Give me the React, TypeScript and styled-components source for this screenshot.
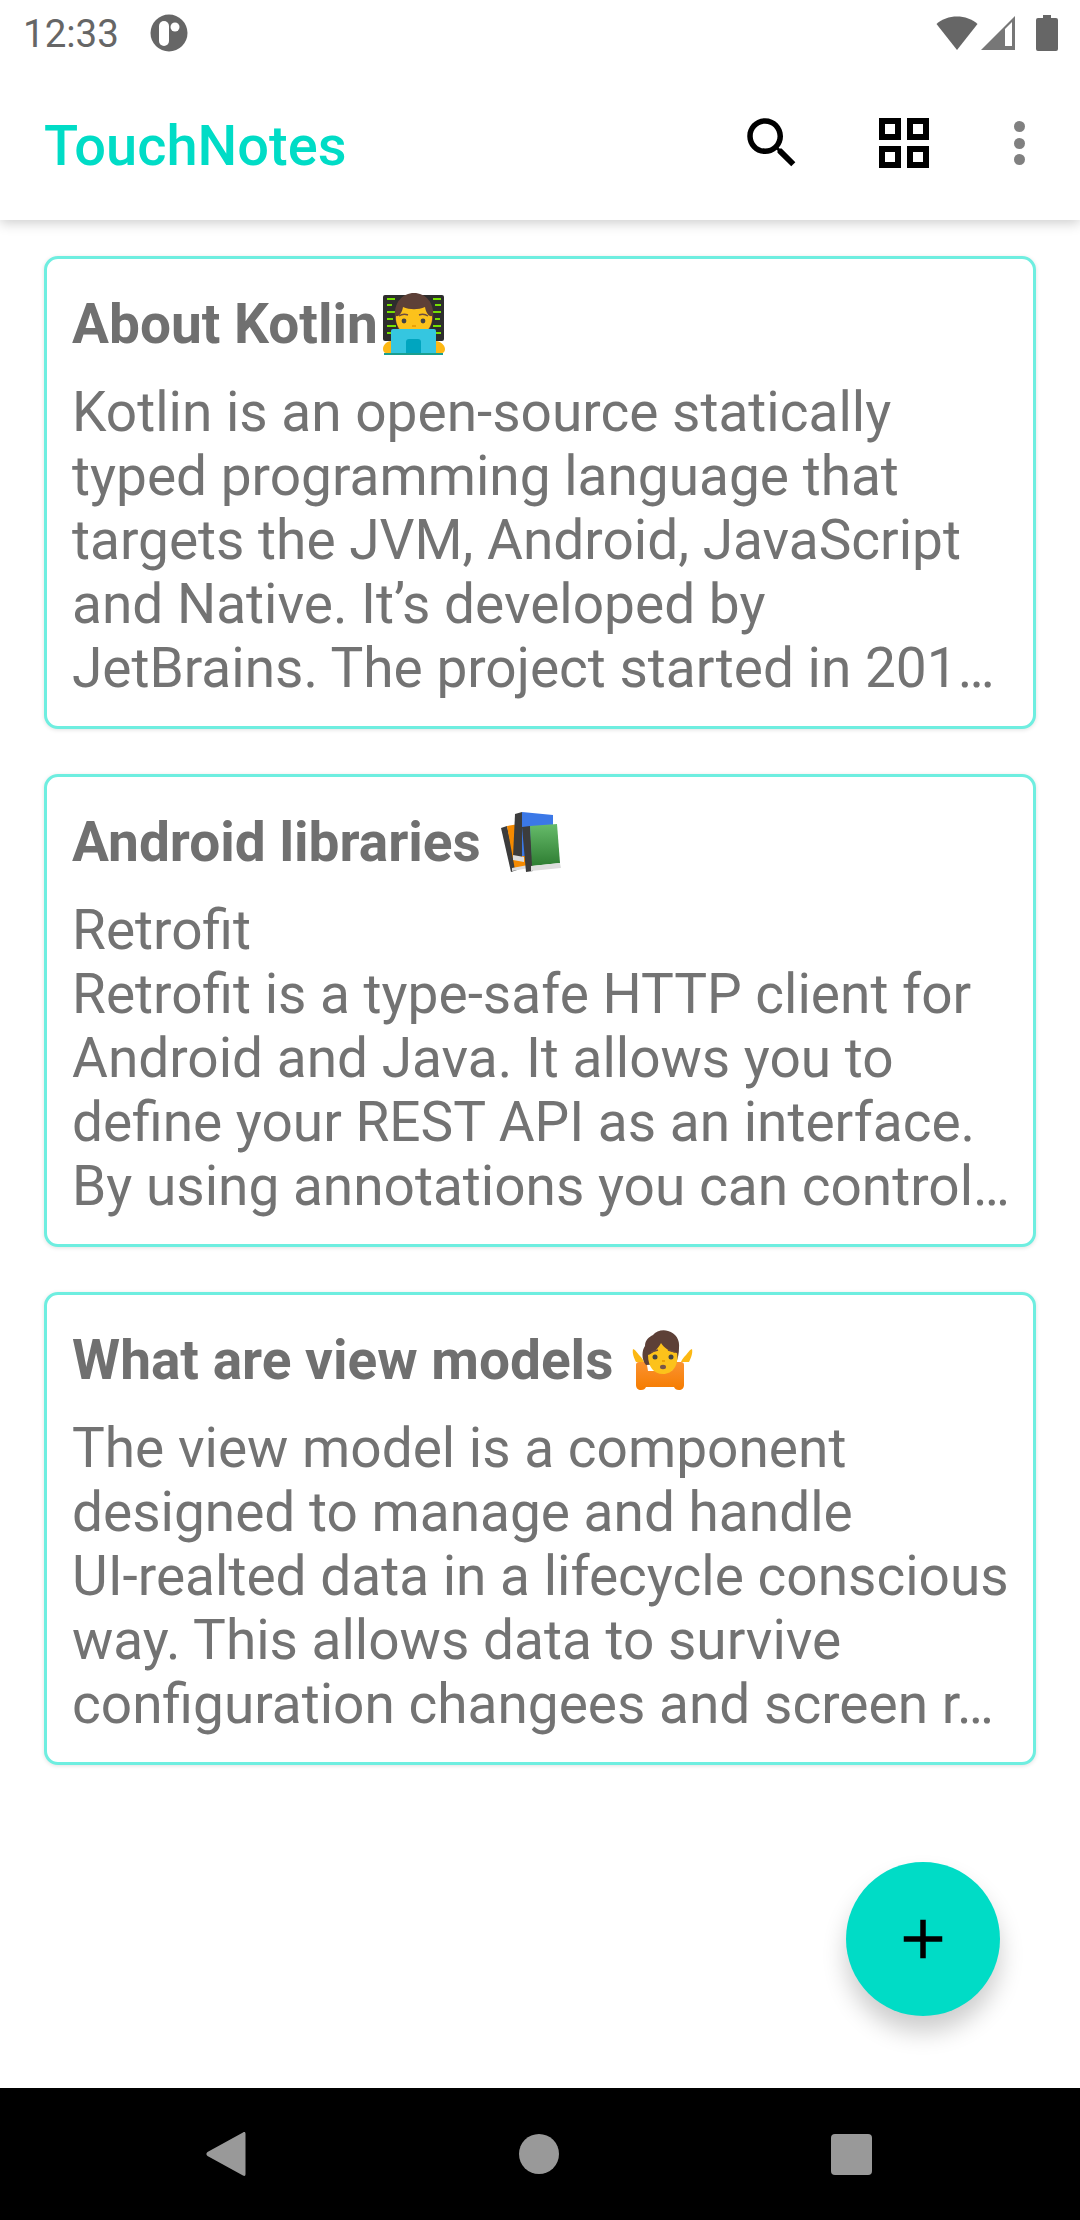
import styled, { createGlobalStyle } from "styled-components";

const GlobalStyle = createGlobalStyle`
    html, body {
        margin: 0;
        padding: 0;
        background: #fff;
    }
    * {
        box-sizing: border-box;
    }
`

function TechnologistEmoji() {
    return (
        <svg width="62" height="64" viewBox="0 0 62 64">
            <rect x="0" y="3" width="61" height="46" rx="2" fill="#2d2d2d" />
            <path d="M4 7h8M4 13h5M4 20h9M4 27h6M4 34h9M4 41h5M50 7h8M52 13h6M50 20h8M52 27h5M50 34h8M52 41h6" stroke="#76e000" strokeWidth="2" />
            <path d="M12 27C10 10 20 1 31 1s21 9 19 26l-3 10H15z" fill="#5d4037" />
            <path d="M13 24c3 1 6-3 7-9 7 3 15 3 22 0 1 6 4 10 7 9 1 11-7 20-18 20S12 35 13 24z" fill="#fcc21b" />
            <circle cx="21" cy="29" r="2.400" fill="#444" />
            <circle cx="40" cy="29" r="2.400" fill="#444" />
            <path d="M16 24c3-2 6-2 9-1M36 23c3-1 6-1 9 1" stroke="#6d4c41" strokeWidth="1.500" fill="none" />
            <path d="M29 34h4" stroke="#e59600" strokeWidth="1.500" />
            <path d="M8 39a2 2 0 0 1 2-2h41a2 2 0 0 1 2 2v22H8z" fill="#35c6e0" />
            <path d="M23 61V50a3 3 0 0 1 3-3h9a3 3 0 0 1 3 3v11z" fill="#00a5bf" />
            <path d="M0 57c0-4 4-8 8-8v12H3c-2 0-3-2-3-4zM62 57c0-4-5-8-9-8v12h6c2 0 3-2 3-4z" fill="#fdb813" />
            <rect x="1" y="61" width="59" height="2" fill="#1a9f8f" />
        </svg>
    )
}

function BooksEmoji() {
    return (
        <svg width="60" height="60" viewBox="0 0 60 60">
            <defs>
                <linearGradient id="greenCover" x1="0" y1="0" x2="0" y2="1">
                    <stop offset="0" stopColor="#66bb6a" />
                    <stop offset="1" stopColor="#2e7d32" />
                </linearGradient>
            </defs>
            <path d="M0 16l6-2 10 44-6 2z" fill="#3c3c3c" />
            <path d="M6 14l12-2 10 43-14 3z" fill="#f58a00" />
            <path d="M11 56l16-3 1 3-17 3z" fill="#ddd" />
            <path d="M14 2l7-2v46l-9-1z" fill="#3c3c3c" />
            <path d="M21 0l31 3v41H21z" fill="#3b78e7" />
            <path d="M12 43l11 2v5l-11-2z" fill="#ddd" />
            <path d="M21 15l8-1 3 45-7 1z" fill="#3c3c3c" />
            <path d="M29 14l27-2 3 39-28 3z" fill="url(#greenCover)" />
            <path d="M30 54l29-3 1 5-30 3z" fill="#ddd" />
        </svg>
    )
}

function ShrugEmoji() {
    return (
        <svg width="62" height="62" viewBox="0 0 62 62">
            <defs>
                <linearGradient id="orangeTop" x1="0" y1="0" x2="0" y2="1">
                    <stop offset="0" stopColor="#fb9230" />
                    <stop offset="1" stopColor="#f57c00" />
                </linearGradient>
            </defs>
            <path d="M1 20c3 1 4 4 6 6 2 2 4 4 5 7H4C2 29 0 24 1 20zM60 20c-3 1-4 4-6 6-2 2-4 4-5 7h8c2-4 4-9 3-13z" fill="#fcb813" />
            <path d="M4 36a3 3 0 0 1 3-3h5c2 0 3 1 3 3l1 6h24l1-6c0-2 1-3 3-3h5a3 3 0 0 1 3 3v20c0 3-2 5-5 5s-4-1-5-3H14c-1 2-2 3-5 3s-5-2-5-5z" fill="url(#orangeTop)" />
            <path d="M14 36C9 30 10 21 13 17c0-6 4-9 8-11 3-4 10-6 15-4 8 2 12 9 11 17 0 5-1 10-3 15z" fill="#5d4037" />
            <path d="M16 26c4-1 10-6 13-12 3 5 9 9 16 10 2 12-4 21-14 21-9 0-15-7-15-19z" fill="#fcc21b" />
            <circle cx="23" cy="28" r="2.500" fill="#444" />
            <circle cx="39" cy="28" r="2.500" fill="#444" />
            <path d="M19 23l7-2M36 21l7 2" stroke="#6d4c41" strokeWidth="1.500" />
            <path d="M30 32h3" stroke="#e59600" strokeWidth="1.500" />
            <ellipse cx="31" cy="38" rx="3" ry="2.200" fill="#795548" />
        </svg>
    )
}

const notes = [
    {
        title: "About Kotlin",
        emoji: <TechnologistEmoji />,
        gap: 5,
        lines: [
            "Kotlin is an open-source statically",
            "typed programming language that",
            "targets the JVM, Android, JavaScript",
            "and Native. It’s developed by",
            "JetBrains. The project started in 201…",
        ],
    },
    {
        title: "Android libraries",
        emoji: <BooksEmoji />,
        gap: 20,
        lines: [
            "Retrofit",
            "Retrofit is a type-safe HTTP client for",
            "Android and Java. It allows you to",
            "define your REST API as an interface.",
            "By using annotations you can control…",
        ],
    },
    {
        title: "What are view models",
        emoji: <ShrugEmoji />,
        gap: 19,
        lines: [
            "The view model is a component",
            "designed to manage and handle",
            "UI-realted data in a lifecycle conscious",
            "way. This allows data to survive",
            "configuration changees and screen r…",
        ],
    },
]

export default function App() {
    return (
        <Screen>
            <GlobalStyle />
            <Header>
                <StatusBar>
                    <StatusLeft>
                        <Time>12:33</Time>
                        <svg width="38" height="38" viewBox="0 0 38 38">
                            <circle cx="19" cy="19" r="18.500" fill="#666" />
                            <rect x="9" y="7" width="10" height="25" rx="5" fill="#fff" />
                            <circle cx="25" cy="13" r="4.500" fill="#fff" />
                        </svg>
                    </StatusLeft>
                    <StatusRight>
                        <svg width="42" height="36" viewBox="0 0 42 36">
                            <path d="M0.500 9C11 -1 31 -1 41.500 9L21 35z" fill="#666" />
                        </svg>
                        <svg width="36" height="36" viewBox="0 0 36 36">
                            <path d="M1 35L35 1v34z" fill="#777" />
                            <path d="M25 31V14l7-7v24z" fill="#fff" />
                        </svg>
                        <BatteryIcon width="22" height="36" viewBox="0 0 22 36">
                            <path d="M7 0h8v3h5a2 2 0 0 1 2 2v29a2 2 0 0 1-2 2H2a2 2 0 0 1-2-2V5a2 2 0 0 1 2-2h5z" fill="#666" />
                        </BatteryIcon>
                    </StatusRight>
                </StatusBar>
                <Toolbar>
                    <Title>TouchNotes</Title>
                    <ActionButton>
                        <svg width="66" height="66" viewBox="0 0 24 24" fill="#000">
                            <path d="M15.500 14h-.79l-.28-.27C15.410 12.590 16 11.110 16 9.500 16 5.910 13.090 3 9.500 3S3 5.910 3 9.500 5.910 16 9.500 16c1.610 0 3.090-.59 4.230-1.570l.27.28v.79l5 4.990L20.490 19l-4.990-5zm-6 0C7.010 14 5 11.990 5 9.500S7.010 5 9.500 5 14 7.010 14 9.500 11.990 14 9.500 14z" />
                        </svg>
                    </ActionButton>
                    <ActionButton>
                        <svg width="66" height="66" viewBox="0 0 66 66" fill="none" stroke="#000" strokeWidth="6">
                            <rect x="11" y="11" width="16" height="16" />
                            <rect x="39" y="11" width="16" height="16" />
                            <rect x="11" y="39" width="16" height="16" />
                            <rect x="39" y="39" width="16" height="16" />
                        </svg>
                    </ActionButton>
                    <OverflowButton>
                        <Dot />
                        <Dot />
                        <Dot />
                    </OverflowButton>
                </Toolbar>
            </Header>
            <Content>
                {notes.map((note) => (
                    <Card key={note.title}>
                        <CardTitle $gap={note.gap}>
                            {note.title}
                            {note.emoji}
                        </CardTitle>
                        <CardBody>
                            {note.lines.map((line) => (
                                <BodyLine key={line}>{line}</BodyLine>
                            ))}
                        </CardBody>
                    </Card>
                ))}
                <Fab>
                    <svg width="66" height="66" viewBox="0 0 24 24" fill="#000">
                        <path d="M19 13h-6v6h-2v-6H5v-2h6V5h2v6h6v2z" />
                    </svg>
                </Fab>
            </Content>
            <NavBar>
                <svg width="40" height="46" viewBox="0 0 40 46">
                    <path d="M37 1.500c1.500-1 2.500-.5 2.500 1.500v40c0 2-1 2.500-2.500 1.500L1.500 25c-1.500-1-1.500-3 0-4z" fill="#999" />
                </svg>
                <HomeButton />
                <RecentButton />
            </NavBar>
        </Screen>
    )
}

const Screen = styled.div`
    display: flex;
    flex-direction: column;
    width: 1080px;
    height: 2220px;
    overflow: hidden;
    background: #fff;
    font-family: Roboto, "Noto Sans", sans-serif;
`
const Header = styled.header`
    position: relative;
    z-index: 1;
    background: #fff;
    box-shadow: 0 3px 12px rgba(0, 0, 0, 0.2);
`
const StatusBar = styled.div`
    display: flex;
    align-items: center;
    justify-content: space-between;
    height: 66px;
    padding: 0 22px 0 23px;
`
const StatusLeft = styled.div`
    display: flex;
    align-items: center;
    gap: 31px;
`
const StatusRight = styled.div`
    display: flex;
    align-items: center;
    gap: 2px;
`
const BatteryIcon = styled.svg`
    margin-left: 18px;
`
const Time = styled.span`
    font-size: 38.500px;
    color: #666;
`
const Toolbar = styled.div`
    display: flex;
    align-items: center;
    height: 154px;
    padding: 0 11px 0 44px;
`
const Title = styled.h1`
    flex: 1;
    margin: 0;
    padding-top: 5px;
    font-size: 56px;
    font-weight: 500;
    color: #00dcc6;
`
const ActionButton = styled.div`
    display: flex;
    align-items: center;
    justify-content: center;
    width: 132px;
    height: 132px;
`
const OverflowButton = styled.div`
    display: flex;
    flex-direction: column;
    align-items: center;
    justify-content: center;
    gap: 5.500px;
    width: 99px;
    height: 132px;
`
const Dot = styled.span`
    width: 11px;
    height: 11px;
    border-radius: 50%;
    background: #808080;
`
const Content = styled.main`
    position: relative;
    flex: 1;
    display: flex;
    flex-direction: column;
    gap: 45px;
    padding: 36px 44px 0;
`
const Card = styled.article`
    height: 473px;
    padding: 34px 25px 0;
    border: 3px solid #6eeee0;
    border-radius: 14px;
    background: #fff;
    box-shadow: 0 1px 4px rgba(0, 0, 0, 0.12);
`
const CardTitle = styled.h2<{ $gap: number }>`
    display: flex;
    align-items: center;
    gap: ${(p) => p.$gap}px;
    height: 62px;
    margin: 0 0 25px;
    font-size: 55px;
    font-weight: 700;
    color: #707070;
`
const CardBody = styled.div`
    font-size: 55px;
    line-height: 64px;
    color: #737373;
`
const BodyLine = styled.div`
    white-space: nowrap;
`
const Fab = styled.button`
    position: absolute;
    right: 80px;
    bottom: 72px;
    display: flex;
    align-items: center;
    justify-content: center;
    width: 154px;
    height: 154px;
    padding: 0;
    border: none;
    border-radius: 50%;
    background: #00dcc6;
    box-shadow: 0 16px 24px rgba(0, 0, 0, 0.2);
`
const NavBar = styled.nav`
    display: grid;
    grid-template-columns: repeat(3, auto);
    justify-content: space-between;
    align-items: center;
    height: 132px;
    padding: 0 208px 0 206px;
    background: #000;
`
const HomeButton = styled.span`
    width: 40px;
    height: 40px;
    border-radius: 50%;
    background: #999;
`
const RecentButton = styled.span`
    width: 41px;
    height: 41px;
    border-radius: 4px;
    background: #999;
`
